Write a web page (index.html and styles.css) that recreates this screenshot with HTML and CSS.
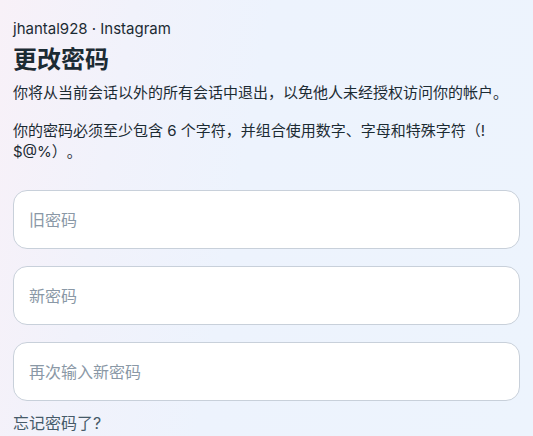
FILE: index.html
```html
<!DOCTYPE html>
<html lang="zh-CN">
<head>
<meta charset="utf-8">
<title>更改密码</title>
<link rel="stylesheet" href="styles.css">
</head>
<body>
<main class="page">
  <header class="head">
    <div class="account">jhantal928 · Instagram</div>
    <h1 class="title">更改密码</h1>
  </header>
  <p class="text">你将从当前会话以外的所有会话中退出，以免他人未经授权访问你的帐户。</p>
  <p class="text">你的密码必须至少包含 6 个字符，并组合使用数字、字母和特殊字符（!<wbr>$@%）。</p>
  <form class="fields">
    <input class="field" type="password" placeholder="旧密码">
    <input class="field" type="password" placeholder="新密码">
    <input class="field" type="password" placeholder="再次输入新密码">
  </form>
  <a class="forgot" href="#">忘记密码了?</a>
</main>
</body>
</html>
```
FILE: styles.css
```css
html, body {
  margin: 0;
  height: 100%;
}
body {
  background: linear-gradient(100deg, #f8f1f8 0%, #f1f2fb 22%, #edf3fd 45%, #edf4fd 100%);
  font-family: Inter, "Noto Sans CJK SC", sans-serif;
  color: #1c2b33;
  overflow: hidden;
}
.page {
  padding: 19px 13px 0 13px;
  display: flex;
  flex-direction: column;
}
.head {
  display: flex;
  flex-direction: column;
  gap: 6px;
}
.account {
  font-size: 15px;
  line-height: 20px;
  color: #1c2b33;
}
.title {
  margin: 0;
  font-size: 24px;
  line-height: 30px;
  font-weight: 700;
  color: #1c2b33;
}
.text {
  margin: 7px 0 9px;
  font-size: 15px;
  line-height: 21px;
  color: #1c2b33;
  text-spacing-trim: space-all;
}
.text + .text {
  margin-top: 8px;
}
.fields {
  margin-top: 19px;
  display: flex;
  flex-direction: column;
  gap: 17px;
}
.field {
  box-sizing: border-box;
  width: 100%;
  height: 59px;
  margin: 0;
  padding: 0 15px;
  border: 1px solid #c8d0da;
  border-radius: 14px;
  background: #ffffff;
  font-family: Inter, "Noto Sans CJK SC", sans-serif;
  font-size: 16px;
  color: #1c2b33;
  outline: none;
}
.field::placeholder {
  color: #8a98a6;
}
.forgot {
  margin-top: 11px;
  font-size: 16px;
  line-height: 22px;
  color: #465a69;
  text-decoration: none;
}
```
